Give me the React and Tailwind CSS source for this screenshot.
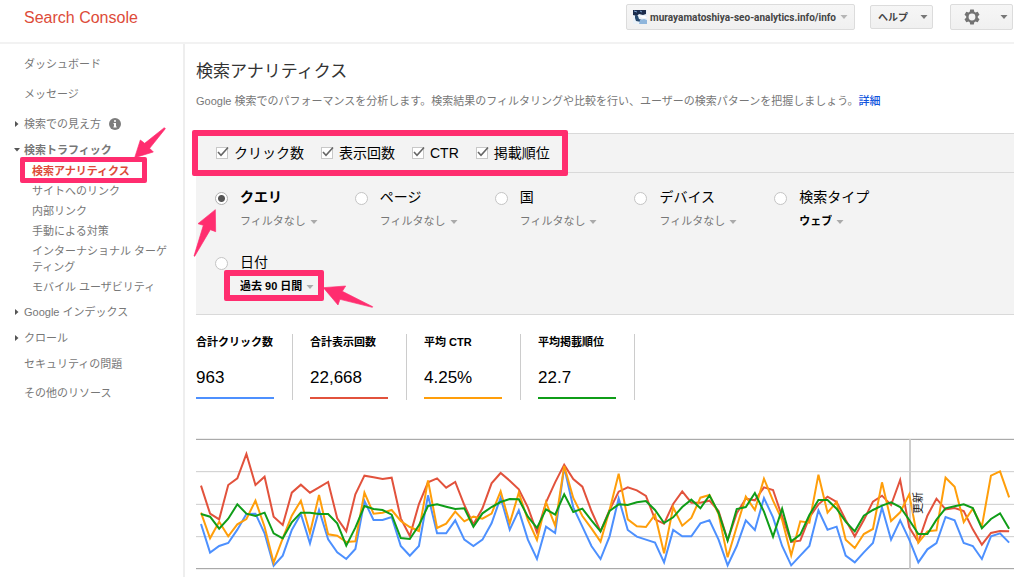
import React from "react";

const X0 = 33;
const STEP = 27.24;

const SERIES = [
  {
    name: "clicks",
    color: "#4d90fe",
    data: [
      282, 368, 348, 339, 299, 252, 251, 310, 407, 377, 300, 252, 340, 240, 328, 367, 387, 357,
      213, 270, 270, 261, 348, 377, 348, 196, 310, 310, 271, 329, 348, 329, 280, 203, 299, 241,
      329, 387, 290, 309, 112, 232, 290, 348, 387, 319, 205, 300, 320, 329, 338, 397, 300, 319,
      319, 280, 271, 329, 406, 348, 271, 300, 204, 262, 348, 406, 377, 348, 241, 299, 290, 377,
      397, 367, 339, 233, 329, 271, 329, 397, 358, 339, 261, 271, 339, 348, 387, 319, 310, 338,
    ],
  },
  {
    name: "impressions",
    color: "#e2523c",
    data: [
      167, 251, 268, 165, 145, 72, 165, 140, 260, 285, 188, 164, 188, 172, 156, 265, 304, 193,
      137, 142, 147, 143, 265, 318, 222, 157, 145, 173, 156, 225, 283, 235, 160, 129, 152, 178,
      232, 308, 217, 157, 104, 147, 170, 243, 304, 240, 185, 172, 181, 198, 268, 281, 222, 184,
      218, 218, 212, 243, 330, 250, 206, 211, 172, 180, 260, 336, 332, 262, 223, 200, 216, 270,
      319, 270, 215, 197, 225, 150, 292, 336, 257, 206, 238, 234, 243, 298, 344, 309, 303, 304,
    ],
  },
  {
    name: "ctr",
    color: "#ff9e0a",
    data: [
      248, 325, 275, 319, 283, 267, 212, 290, 398, 325, 257, 212, 309, 195, 313, 317, 336, 334,
      188, 251, 248, 240, 273, 291, 303, 151, 294, 281, 245, 274, 260, 266, 251, 184, 280, 188,
      270, 330, 217, 287, 108, 204, 258, 295, 335, 240, 131, 268, 289, 291, 254, 370, 232, 287,
      264, 203, 195, 252, 382, 290, 200, 240, 146, 212, 270, 376, 274, 278, 134, 248, 216, 329,
      354, 312, 297, 157, 273, 247, 193, 338, 304, 301, 143, 170, 276, 236, 289, 137, 124, 202,
    ],
  },
  {
    name: "position",
    color: "#0f9d18",
    data: [
      252, 260, 296, 266, 223, 251, 258, 248, 310, 325, 277, 248, 248, 252, 252, 280, 347, 293,
      228, 237, 240, 254, 324, 327, 286, 228, 223, 230, 237, 235, 290, 250, 231, 216, 207, 208,
      260, 294, 238, 254, 193, 246, 236, 271, 304, 243, 223, 225, 217, 213, 240, 279, 262, 231,
      209, 235, 196, 248, 332, 237, 231, 189, 245, 320, 236, 334, 314, 255, 210, 210, 236, 275,
      304, 257, 240, 227, 217, 231, 270, 312, 312, 269, 235, 229, 223, 234, 295, 267, 250, 296,
    ],
  },
];

const METRICS = ["クリック数", "表示回数", "CTR", "掲載順位"];

const DIMENSIONS = [
  { id: "query", label: "クエリ", filter: "フィルタなし", checked: true },
  { id: "page", label: "ページ", filter: "フィルタなし" },
  { id: "country", label: "国", filter: "フィルタなし" },
  { id: "device", label: "デバイス", filter: "フィルタなし" },
  { id: "type", label: "検索タイプ", filter: "ウェブ", strong: true },
  { id: "date", label: "日付", filter: "過去 90 日間", strong: true, marked: true },
];

const TOTALS = [
  { label: "合計クリック数", value: "963", bar: "bg-[#4d90fe]" },
  { label: "合計表示回数", value: "22,668", bar: "bg-[#e2523c]" },
  { label: "平均 CTR", value: "4.25%", bar: "bg-[#ff9e0a]" },
  { label: "平均掲載順位", value: "22.7", bar: "bg-[#0f9d18]" },
];

function Caret({ className }) {
  return (
    <svg viewBox="0 0 8 4" className={`h-1 w-2 shrink-0 ${className}`} aria-hidden="true">
      <path d="M.5 0h7L4 4z" fill="currentColor" />
    </svg>
  );
}

function Arrow({ viewBox, points, className }) {
  return (
    <svg viewBox={viewBox} className={`pointer-events-none absolute z-10 ${className}`} aria-hidden="true">
      <polygon points={points} fill="#ff2d6f" stroke="#ff2d6f" strokeWidth="2" strokeLinejoin="round" />
    </svg>
  );
}

function Header() {
  const button =
    "flex items-center rounded-xs border border-[#dcdcdc] bg-linear-to-b from-[#f6f6f6] to-[#f0f0f0] font-bold text-[#444]";
  return (
    <header className="mr-[10px] flex h-11 items-start border-b-2 border-[#f2f2f2] pl-6">
      <h1 className="mt-[6px] text-base leading-6 text-[#dd4b39]">Search Console</h1>
      <div className="mr-px ml-auto flex items-start pt-1">
        <button
          type="button"
          className={`${button} h-[26px] px-[6px] font-['Roboto','Noto_Sans_CJK_JP',sans-serif] text-[10px]`}
        >
          <svg viewBox="0 0 14 14" className="mr-[3px] size-[14px]" aria-hidden="true">
            <path d="M0 0h14v14H0z" fill="#e9f1f8" />
            <path d="M0 0h13v4l-3 1-4-1-2 2-4-1z" fill="#1b2c4c" />
            <path d="M2 5l3 1 1 3 3 1-1 2-5-1-1-3z" fill="#26496f" />
            <path d="M1 1l3 1M7 1l2 1" stroke="#7aa0cc" />
            <path d="M7 10l4-1 3 1v4H6z" fill="#8fb6dc" />
            <path d="M6 6l6 0 2 2-4 0z" fill="#fff" />
          </svg>
          murayamatoshiya-seo-analytics.info/info
          <Caret className="ml-1 text-[#b5b5b5]" />
        </button>
        <button type="button" className={`${button} mt-px ml-[15px] h-6 w-[63px] justify-between pr-1 pl-[7px] text-[10px]`}>
          ヘルプ
          <Caret className="text-[#777]" />
        </button>
        <button
          type="button"
          aria-label="設定"
          className={`${button} ml-[17px] h-[26px] w-[63px] justify-between pr-1 pl-[13px]`}
        >
          <svg viewBox="0 0 16 16" className="size-4" aria-hidden="true">
            <path
              fill="#737373"
              fillRule="evenodd"
              d="M6.200 .5h3.600l.5 2.200 1.200.7 2.200-.7 1.800 3.100-1.700 1.500v1.400l1.700 1.500-1.800 3.100-2.200-.7-1.200.7-.5 2.200H6.200l-.5-2.200-1.200-.7-2.200.7L.5 10.200l1.700-1.500V7.300L.5 5.800l1.800-3.100 2.200.7 1.200-.7zM8 4.600a3.400 3.400 0 1 0 0 6.800 3.400 3.400 0 0 0 0-6.800z"
            />
          </svg>
          <Caret className="text-[#777]" />
        </button>
      </div>
    </header>
  );
}

function Marker({ open }) {
  return (
    <svg viewBox="0 0 6 6" className="mr-1 size-[6px] shrink-0" aria-hidden="true">
      <path d={open ? "M0 1h6L3 4.500z" : "M1 0v6l3.500-3z"} fill="#555" />
    </svg>
  );
}

function Sidebar() {
  return (
    <nav className="w-[185px] shrink-0 border-r-2 border-[#eee] pt-[5px] pr-2 pl-[14px] text-[11px] leading-4 text-[#777]">
      <ul>
        <li className="flex h-[30px] items-center pl-[10px]">
          <a href="#dashboard">ダッシュボード</a>
        </li>
        <li className="flex h-[30px] items-center pl-[10px]">
          <a href="#messages">メッセージ</a>
        </li>
        <li className="flex h-[30px] items-center">
          <Marker />
          <a href="#appearance">検索での見え方</a>
          <svg viewBox="0 0 12 12" className="ml-2 size-3" aria-hidden="true">
            <circle cx="6" cy="6" r="6" fill="#7d7d7d" />
            <path d="M5 2.300h2v1.500H5zM4.500 5H7v3.600h.700v1H4.400v-1H5V6h-.500z" fill="#fff" />
          </svg>
        </li>
        <li>
          <div className="flex h-[22px] items-center">
            <Marker open />
            <a href="#traffic" className="font-bold">検索トラフィック</a>
          </div>
          <ul className="pb-0.5 pl-[18px]">
            <li className="relative py-0.5">
              <a href="#analytics" className="font-bold text-[#dd4b39]">検索アナリティクス</a>
              <span className="pointer-events-none absolute -top-1 -left-3 h-[26px] w-[127px] rounded-xs border-[5px] border-[#ff2d6f]" />
              <Arrow
                viewBox="402 382 96 96"
                points="404,474 421,421 434,431 493,384 496,387 449,446 460,457"
                className="-top-[34px] left-[102px] size-8"
              />
            </li>
            <li className="py-0.5"><a href="#links">サイトへのリンク</a></li>
            <li className="py-0.5"><a href="#internal">内部リンク</a></li>
            <li className="py-0.5"><a href="#manual">手動による対策</a></li>
            <li className="py-0.5"><a href="#international">インターナショナル ターゲティング</a></li>
            <li className="py-0.5"><a href="#mobile">モバイル ユーザビリティ</a></li>
          </ul>
        </li>
        <li className="flex h-[26px] items-center">
          <Marker />
          <a href="#index">Google インデックス</a>
        </li>
        <li className="flex h-[26px] items-center">
          <Marker />
          <a href="#crawl">クロール</a>
        </li>
        <li className="flex h-[26px] items-center pl-[10px]">
          <a href="#security">セキュリティの問題</a>
        </li>
        <li className="flex h-8 items-center pl-[10px]">
          <a href="#other">その他のリソース</a>
        </li>
      </ul>
    </nav>
  );
}

function MetricCheckbox({ label }) {
  return (
    <label className="flex items-center gap-[6px]">
      <span className="relative flex size-3">
        <input type="checkbox" defaultChecked className="peer size-3 appearance-none border border-[#c8c8c8] bg-white" />
        <svg
          viewBox="0 0 14 12"
          className="pointer-events-none absolute -top-px left-0 hidden h-3 w-[14px] peer-checked:block"
          aria-hidden="true"
        >
          <path d="M2 6l3 3.300L12 1.500" fill="none" stroke="#666" strokeWidth="1.600" />
        </svg>
      </span>
      {label}
    </label>
  );
}

function Dimension({ item }) {
  return (
    <div className="relative w-[17.5%]">
      <label className="flex h-5 items-center gap-3">
        <input
          type="radio"
          name="dimension"
          defaultChecked={item.checked}
          className="relative top-px size-[13px] shrink-0 appearance-none rounded-full border border-[#c4c4c4] bg-white checked:border-[#b0b0b0] checked:bg-[radial-gradient(circle,#555_3px,#fff_4px)]"
        />
        <span className={item.checked ? "font-bold" : ""}>{item.label}</span>
      </label>
      <div className="mt-[6px] flex h-4 items-center pl-[25px] text-[11px]">
        <select
          aria-label={item.label}
          className={`field-sizing-content h-4 appearance-none bg-transparent pr-3 leading-4 whitespace-nowrap ${
            item.strong ? "font-bold text-black" : "text-[#777]"
          }`}
        >
          <option>{item.filter}</option>
        </select>
        <Caret className="pointer-events-none mt-0.5 -ml-2 text-[#aaa]" />
      </div>
      {item.checked && (
        <Arrow
          viewBox="8 264 72 150"
          points="75,269 23,311 39,316 11,408 13,409 60,329 76,335"
          className="top-[21px] -left-[22px] h-[50px] w-6"
        />
      )}
      {item.marked && (
        <>
          <span className="pointer-events-none absolute top-[18px] left-[9px] h-[31px] w-[100px] rounded-xs border-[6px] border-[#ff2d6f]" />
          <Arrow
            viewBox="396 492 156 75"
            points="400,503 467,498 457,514 548,560 547,562 450,538 444,555"
            className="top-8 left-[107px] h-[25px] w-[52px]"
          />
        </>
      )}
    </div>
  );
}

function Filters() {
  return (
    <section className="mt-6 border-y border-[#d9d9d9] bg-[#f3f3f3] text-sm text-black">
      <div className="relative flex h-[39px] items-center gap-[17px] border-b border-[#d9d9d9] pl-5">
        {METRICS.map((m) => (
          <MetricCheckbox key={m} label={m} />
        ))}
        <span className="pointer-events-none absolute -top-1 -left-1 h-[46px] w-[376px] rounded-xs border-[6px] border-[#ff2d6f]" />
      </div>
      <div className="flex flex-wrap gap-y-[23px] pt-[14px] pb-5 pl-[19px]">
        {DIMENSIONS.map((d) => (
          <Dimension key={d.id} item={d} />
        ))}
      </div>
    </section>
  );
}

function Totals() {
  return (
    <dl className="mt-[19px] flex gap-[17px] text-black">
      {TOTALS.map((t) => (
        <div key={t.label} className="w-[97px] border-r border-[#ccc] pr-[18px] pb-px">
          <dt className="text-[11px] leading-4 font-bold whitespace-nowrap">{t.label}</dt>
          <dd className="mt-4 text-[17px] leading-6">{t.value}</dd>
          <div className={`mt-[7px] h-0.5 ${t.bar}`} />
        </div>
      ))}
    </dl>
  );
}

function Chart() {
  return (
    <div className="relative mt-[30px]">
      <svg viewBox="18 0 2454 441" preserveAspectRatio="none" className="block h-[147px] w-full" role="img" aria-label="検索アナリティクス">
        {[28, 125, 223, 320, 416].map((y) => (
          <line
            key={y}
            x1="18"
            x2="2472"
            y1={y}
            y2={y}
            stroke={y === 28 || y === 416 ? "#999" : "#ccc"}
            strokeWidth="1"
            vectorEffect="non-scaling-stroke"
          />
        ))}
        <line x1="2160" x2="2160" y1="28" y2="416" stroke="#ccc" strokeWidth="2" vectorEffect="non-scaling-stroke" />
        {SERIES.map((s) => (
          <polyline
            key={s.name}
            points={s.data.map((y, i) => `${(X0 + i * STEP).toFixed(1)},${y}`).join(" ")}
            fill="none"
            stroke={s.color}
            strokeWidth="2"
            vectorEffect="non-scaling-stroke"
          />
        ))}
      </svg>
      <span className="absolute top-[62px] left-[87.500%] rotate-180 text-[11px] leading-3 text-[#222] [text-shadow:0_0_2px_#fff,0_0_2px_#fff,0_0_2px_#fff] [writing-mode:sideways-rl]">
        更新
      </span>
    </div>
  );
}

export default function App() {
  return (
    <div className="flex min-h-screen flex-col bg-white font-['Liberation_Sans','Noto_Sans_CJK_JP',sans-serif]">
      <Header />
      <div className="flex flex-1">
        <Sidebar />
        <main className="min-w-0 flex-1 pr-[10px] pl-[11px]">
          <h2 className="mt-4 text-[17px] leading-6 text-[#333]">検索アナリティクス</h2>
          <p className="mt-[9px] text-[11px] leading-4 text-[#777]">
            Google 検索でのパフォーマンスを分析します。検索結果のフィルタリングや比較を行い、ユーザーの検索パターンを把握しましょう。
            <a href="#details" className="font-medium text-[#1155dd]">詳細</a>
          </p>
          <Filters />
          <Totals />
          <Chart />
        </main>
      </div>
    </div>
  );
}
